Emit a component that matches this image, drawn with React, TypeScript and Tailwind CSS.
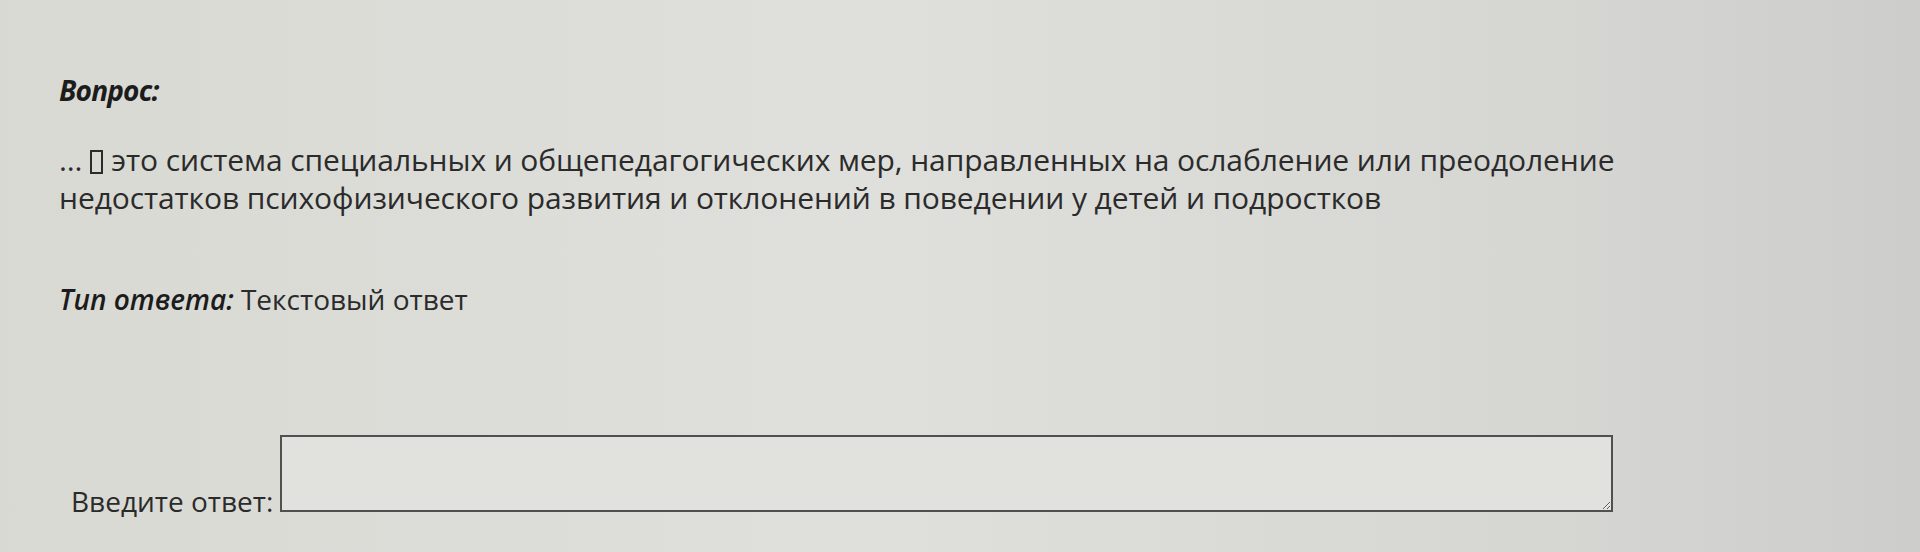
export default function App() {
  return (
    <div
      className="h-[552px] w-[1920px] overflow-hidden bg-[linear-gradient(90deg,#d9d9d4_0%,#dfdfdb_45%,#d6d6d3_80%,#cdcecc_100%)] text-[#2b2b2b]"
      style={{ fontFamily: '"Open Sans", "Noto Sans", sans-serif' }}
    >
      <div className="pl-[59px] pt-[71px]">
        <div className="text-[28px] font-bold italic leading-[38px] tracking-[-0.8px] text-[#1c1c1c]">Вопрос:</div>
        <p className="mt-[32px] w-[1600px] text-[30px] leading-[38px] tracking-[-0.1px]">
          <span>...</span>
          <span className="mx-[8px] inline-block h-[24px] w-[13px] align-[-3px] border-2 border-[#2b2b2b]" />
          <span>
            это система специальных и общепедагогических мер, направленных на ослабление или преодоление недостатков
            психофизического развития и отклонений в поведении у детей и подростков
          </span>
        </p>
        <div className="mt-[63px] text-[28px] leading-[38px]">
          <span className="font-semibold italic text-[#1c1c1c]">Тип ответа:</span> Текстовый ответ
        </div>
        <div className="mt-[117px] flex items-start gap-[7px] pl-[12px]">
          <span className="mt-[47px] text-[28px] leading-[38px]">Введите ответ:</span>
          <textarea className="h-[77px] w-[1333px] resize border-2 border-[#505050] bg-[#e1e1dd] outline-none" />
        </div>
      </div>
    </div>
  );
}
